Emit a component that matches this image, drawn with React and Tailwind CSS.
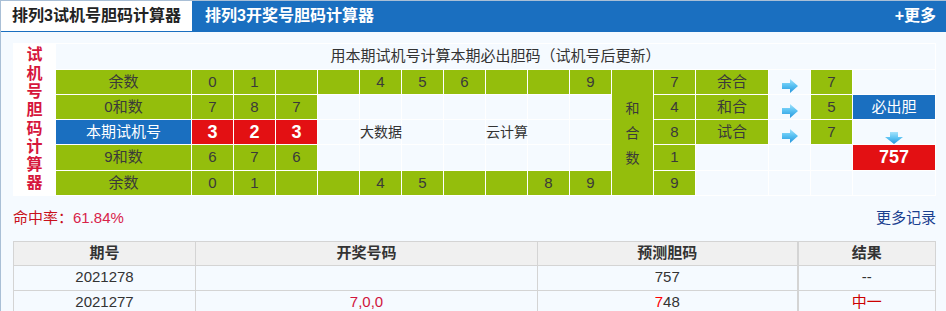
const green = 'bg-[#94be0c] text-[#3a3a3a]'

function RightArrow() {
  return (
    <svg width="16" height="14" viewBox="0 0 16 14">
      <defs>
        <linearGradient id="ra" x1="0" y1="0" x2="0" y2="1">
          <stop offset="0" stopColor="#a3e2fb" />
          <stop offset="0.45" stopColor="#5cc3f3" />
          <stop offset="1" stopColor="#2796dc" />
        </linearGradient>
      </defs>
      <path d="M0 4H8V0L16 7L8 14V10H0Z" fill="url(#ra)" />
    </svg>
  )
}

function DownArrow() {
  return (
    <svg width="18" height="12" viewBox="0 0 18 12">
      <defs>
        <linearGradient id="da" x1="0" y1="0" x2="0" y2="1">
          <stop offset="0" stopColor="#a3e2fb" />
          <stop offset="0.5" stopColor="#5cc3f3" />
          <stop offset="1" stopColor="#2796dc" />
        </linearGradient>
      </defs>
      <path d="M5 0H13V5H18L9 12L0 5H5Z" fill="url(#da)" />
    </svg>
  )
}

function Cell({ children, className = '' }) {
  return (
    <div className={`flex items-center justify-center text-[15px] ${className}`}>
      {children}
    </div>
  )
}

function DigitCells({ values }) {
  return values.map((v, i) => (
    <Cell key={i} className={green}>{v}</Cell>
  ))
}

function Empty({ n = 1 }) {
  return Array.from({ length: n }).map((_, i) => <div key={i} className="bg-[#f5faff]" />)
}

export default function App() {
  return (
    <div className="w-[946px] h-[311px] overflow-hidden bg-[#f5faff] border-l border-t border-[#a9bfd6] text-[#333] font-['Liberation_Sans','Noto_Sans_CJK_SC',sans-serif]">
      {/* Tabs */}
      <div className="flex h-[31px] bg-[#1a6fc0] border-b border-[#1a6fc0]">
        <div className="w-[191px] bg-white flex items-center justify-center text-[16px] font-bold text-[#222]">
          排列3试机号胆码计算器
        </div>
        <div className="ml-[13px] flex items-center text-[16px] font-bold text-white">
          排列3开奖号胆码计算器
        </div>
        <div className="ml-auto mr-[10px] flex items-center text-[16px] font-bold text-white">
          +更多
        </div>
      </div>

      <div className="pl-[12px] pr-[10px] pt-[11px]">
        {/* Calculator grid */}
        <div className="w-[923px] bg-white p-px">
          <div className="grid gap-px grid-cols-[41px_135px_repeat(10,41px)_41px_41px_72px_41px_41px_82px] grid-rows-[25px_24px_24px_24px_25px_24px]">
            <div className="row-span-6 bg-white flex flex-col items-center justify-center text-[16px] font-bold leading-[18.3px] text-[#d6163c]">
              {'试机号胆码计算器'.split('').map((c, i) => (
                <span key={i}>{c}</span>
              ))}
            </div>
            <Cell className="col-span-17 bg-[#f5faff] text-[#333]">
              用本期试机号计算本期必出胆码（试机号后更新）
            </Cell>

            {/* row 1 */}
            <Cell className={`${green} text-[14px]`}>余数</Cell>
            <DigitCells values={['0', '1', '', '', '4', '5', '6', '', '', '9']} />
            <div className={`row-span-5 ${green} flex flex-col items-center justify-center text-[14px] leading-[25px] pt-[2px]`}>
              <span>和</span>
              <span>合</span>
              <span>数</span>
            </div>
            <Cell className={green}>7</Cell>
            <Cell className={`${green} text-[14px]`}>余合</Cell>
            <div className="bg-[#f5faff] flex items-end justify-center pb-px"><RightArrow /></div>
            <Cell className={green}>7</Cell>
            <Empty />

            {/* row 2 */}
            <Cell className={`${green} text-[14px]`}>0和数</Cell>
            <DigitCells values={['7', '8', '7']} />
            <Empty n={7} />
            <Cell className={green}>4</Cell>
            <Cell className={`${green} text-[14px]`}>和合</Cell>
            <div className="bg-[#f5faff] flex items-end justify-center pb-px"><RightArrow /></div>
            <Cell className={green}>5</Cell>
            <Cell className="bg-[#1a6fc0] text-white">必出胆</Cell>

            {/* row 3 */}
            <Cell className="bg-[#1a6fc0] text-white">本期试机号</Cell>
            <Cell className="bg-[#e31013] text-white font-bold text-[18px]">3</Cell>
            <Cell className="bg-[#e31013] text-white font-bold text-[18px]">2</Cell>
            <Cell className="bg-[#e31013] text-white font-bold text-[18px]">3</Cell>
            <Empty />
            <div className="relative z-10 bg-[#f5faff] flex items-center whitespace-nowrap text-[14px]">大数据</div>
            <Empty n={2} />
            <div className="relative z-10 bg-[#f5faff] flex items-center whitespace-nowrap text-[14px]">云计算</div>
            <Empty n={2} />
            <Cell className={green}>8</Cell>
            <Cell className={`${green} text-[14px]`}>试合</Cell>
            <div className="bg-[#f5faff] flex items-end justify-center pb-px"><RightArrow /></div>
            <Cell className={green}>7</Cell>
            <div className="bg-[#f5faff] flex items-end justify-center"><DownArrow /></div>

            {/* row 4 */}
            <Cell className={`${green} text-[14px]`}>9和数</Cell>
            <DigitCells values={['6', '7', '6']} />
            <Empty n={7} />
            <Cell className={green}>1</Cell>
            <Empty n={3} />
            <Cell className="bg-[#e31013] text-white font-bold text-[18px]">757</Cell>

            {/* row 5 */}
            <Cell className={`${green} text-[14px]`}>余数</Cell>
            <DigitCells values={['0', '1', '', '', '4', '5', '', '', '8', '9']} />
            <Cell className={green}>9</Cell>
            <Empty n={4} />
          </div>
        </div>

        {/* Hit rate */}
        <div className="mt-[12px] h-[20px] flex items-center justify-between text-[15px]">
          <div>
            <span className="text-[#c8101a]">命中率：</span>
            <span className="text-[#d8234a]">61.84%</span>
          </div>
          <a href="#" className="text-[#1a3f8f]">更多记录</a>
        </div>

        {/* History */}
        <table className="mt-[13px] w-[923px] border-collapse text-[15px] text-center">
          <thead>
            <tr className="bg-[#f0f0f0] h-[21px]">
              <th className="w-[182px] border border-[#d4d4d4] font-bold p-0">期号</th>
              <th className="w-[342px] border border-[#d4d4d4] font-bold p-0">开奖号码</th>
              <th className="w-[260px] border border-[#d4d4d4] font-bold p-0">预测胆码</th>
              <th className="border border-[#d4d4d4] border-l-2 font-bold p-0">结果</th>
            </tr>
          </thead>
          <tbody>
            <tr className="h-[25px]">
              <td className="border border-[#d4d4d4] p-0">2021278</td>
              <td className="border border-[#d4d4d4] p-0"></td>
              <td className="border border-[#d4d4d4] p-0">757</td>
              <td className="border border-[#d4d4d4] border-l-2 p-0">--</td>
            </tr>
            <tr className="h-[25px]">
              <td className="border border-[#d4d4d4] p-0">2021277</td>
              <td className="border border-[#d4d4d4] p-0 text-[#d0143c]">7,0,0</td>
              <td className="border border-[#d4d4d4] p-0"><span className="text-[#ff0000]">7</span>48</td>
              <td className="border border-[#d4d4d4] border-l-2 p-0 text-[#cc0000]">中一</td>
            </tr>
          </tbody>
        </table>
      </div>
    </div>
  )
}
